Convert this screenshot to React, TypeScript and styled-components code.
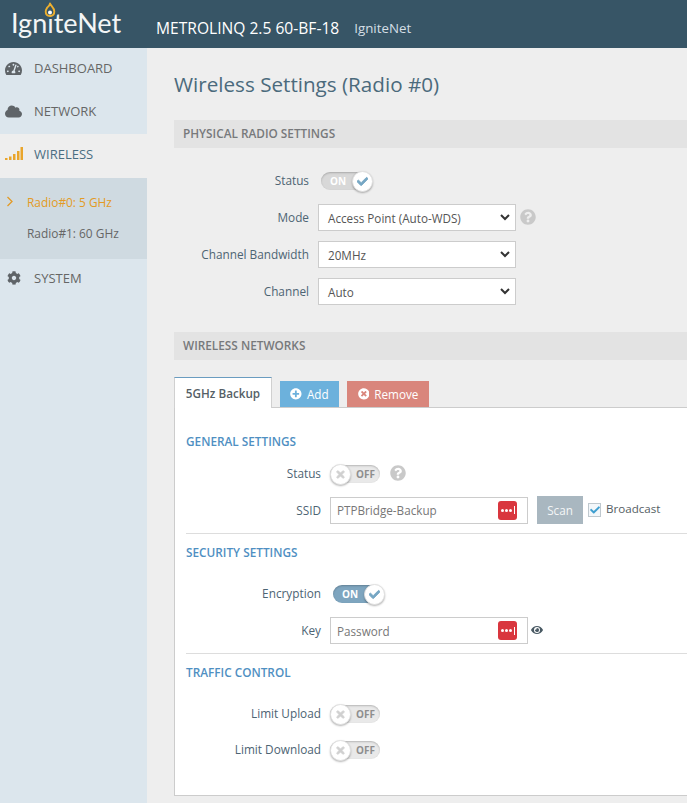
import React from "react";
import styled, { createGlobalStyle } from "styled-components";
import { FaCheck, FaCloud, FaCog, FaEye, FaPlusCircle, FaQuestionCircle, FaTachometerAlt, FaTimes, FaTimesCircle } from "react-icons/fa";

const Global = createGlobalStyle`
  html, body { margin: 0; padding: 0; background: #eeeeee; overflow: hidden; }
  * { box-sizing: border-box; }
  body { font-family: "Open Sans", "Noto Sans", sans-serif; font-size: 12px; color: #4d6473; }
`;

const Page = styled.div`width: 687px; height: 803px; display: flex; flex-direction: column; overflow: hidden;`;
const Header = styled.header`height: 48px; flex: none; background: #375566; display: flex; align-items: center;`;
const LogoBox = styled.div`position: relative; width: 156px; height: 48px; padding: 8px 0 0 11px;`;
const LogoText = styled.span`font-family: "Lato", sans-serif; font-size: 27px; font-weight: 400; line-height: 30px; color: #f3f5f6;`;
const Flame = styled.svg`position: absolute; left: 44px; top: 2px;`;
const Device = styled.span`font-size: 15.6px; font-weight: 400; color: #fff; margin-top: 7px;`;
const DeviceOwner = styled.span`font-size: 13.3px; color: #d5dfe5; margin: 8px 0 0 15px;`;

const Body = styled.div`flex: 1; display: flex; min-height: 0;`;
const Sidebar = styled.nav`width: 147px; flex: none; background: #dce6ed; display: flex; flex-direction: column;`;
const NavItem = styled.div<{ $active?: boolean; $h: number }>`
  height: ${p => p.$h}px; display: flex; align-items: center; padding: 0 0 ${p => (p.$active ? 4 : 3)}px 5px;
  background: ${p => (p.$active ? "#eeeeee" : "transparent")};
  color: ${p => (p.$active ? "#4a6d82" : "#666666")};
  font-size: 13px;
`;
const NavIcon = styled.span`width: 29px; flex: none; display: flex; color: #5f6468; font-size: 17px;`;
const CogIcon = styled.span`width: 29px; flex: none; display: flex; padding-left: 2px; color: #5f6468; font-size: 14px;`;
const SubMenu = styled.div`height: 81px; background: #cfdae1; display: flex; flex-direction: column; padding-top: 8px;`;
const SubItem = styled.div<{ $active?: boolean }>`
  height: 31px; display: flex; align-items: center; padding-left: 6px;
  color: ${p => (p.$active ? "#e39a25" : "#666666")}; font-size: 11.9px;
`;
const Chevron = styled.svg`width: 21px; flex: none;`;

const Main = styled.main`flex: 1; min-width: 0; padding: 0 0 0 27px; display: flex; flex-direction: column;`;
const Title = styled.h1`margin: 21px 0 0; height: 31px; font-size: 20.65px; line-height: 30px; font-weight: 400; color: #4b6a7c;`;
const SectionBar = styled.div<{ $top: number }>`
  margin-top: ${p => p.$top}px; height: 28px; background: #e3e3e3; padding: 0 9px 2px; display: flex; align-items: center;
  font-size: 11.8px; font-weight: 600; color: #77797b; flex: none;
`;
const Form = styled.div`margin-top: 19px; display: flex; flex-direction: column;`;
const Row = styled.div<{ $h: number; $gap?: number }>`
  display: grid; grid-template-columns: 135px auto; column-gap: 9px; height: ${p => p.$h}px; align-items: center;
  margin-top: ${p => p.$gap ?? 0}px; flex: none; justify-items: start;
`;
const Label = styled.label`justify-self: end; font-size: 11.8px; color: #4d6473; white-space: nowrap; padding-bottom: 1px;`;
const Inline = styled.div`display: flex; align-items: center;`;
const SelectBox = styled.div`
  width: 198px; height: 27px; background: #fff; border: 1px solid #cccccc; display: flex; align-items: center;
  justify-content: space-between; padding: 0 5px 0 9px; font-size: 11.7px; color: #555555;
`;
const Caret = styled.svg`width: 10px; height: 7px; flex: none;`;
const Help = styled.span<{ $ml: number }>`display: flex; color: #c9c9c9; font-size: 16px; margin: 0 0 2px ${p => p.$ml}px;`;

const Track = styled.div<{ $on?: boolean; $blue?: boolean }>`
  position: relative; width: 50px; height: 18px; border-radius: 10px; margin-left: ${p => (p.$on ? 3 : 0)}px;
  background: ${p => (p.$blue ? "#7ea5bf" : p.$on ? "#d8d8d8" : "#e9e9e9")};
  box-shadow: inset 0 1px 2px rgba(0,0,0,.22);
  font-size: 10px; font-weight: 700; color: ${p => (p.$on ? "#fff" : "#8e8e8e")};
  display: flex; align-items: center; padding: ${p => (p.$on ? "0 0 0 9px" : "0 0 0 26px")};
`;
const Knob = styled.span<{ $on?: boolean }>`
  position: absolute; top: -1px; ${p => (p.$on ? "right: -2px;" : "left: 0;")}
  width: 21px; height: 21px; border-radius: 50%; background: #fff; border: 1px solid #e1e1e1;
  box-shadow: 0 1px 2px rgba(0,0,0,.3); display: flex; align-items: center; justify-content: center;
  color: ${p => (p.$on ? "#76a7c4" : "#d0d0d0")}; font-size: 11px;
  svg { stroke: currentColor; stroke-width: 40; }
`;
const Toggle = ({ on, blue }: { on?: boolean; blue?: boolean }) => (
  <Track $on={on} $blue={blue}>
    {on ? "ON" : "OFF"}
    <Knob $on={on}>{on ? <FaCheck /> : <FaTimes />}</Knob>
  </Track>
);

const Tabs = styled.div`margin-top: 17px; height: 31px; display: flex; align-items: flex-end; flex: none; position: relative; z-index: 1;`;
const ActiveTab = styled.div`
  width: 98px; height: 31px; background: #fff; border: 1px solid #d0d0d0; border-top: 1px solid #6a9cc0; border-bottom: 0;
  display: flex; align-items: center; justify-content: center; font-size: 11.7px; font-weight: 600; color: #555f66;
`;
const TabButton = styled.div<{ $bg: string; $w: number; $ml: number }>`
  width: ${p => p.$w}px; margin-left: ${p => p.$ml}px; height: 26px; margin-bottom: 1px; background: ${p => p.$bg}; color: #fff;
  display: flex; align-items: center; justify-content: center; gap: 5px; font-size: 11.7px;
`;
const Panel = styled.div`
  margin-top: -1px; height: 389px; width: 560px; flex: none; background: #fff; border: 1px solid #cccccc; padding: 0 11px; display: flex; flex-direction: column;
`;
const PanelHeading = styled.h3<{ $top: number }>`
  margin: ${p => p.$top}px 0 0; height: 18px; line-height: 18px; font-size: 11.8px; font-weight: 600; color: #4f8fc2; flex: none;
`;
const Divider = styled.hr<{ $top: number }>`margin: ${p => p.$top}px 0 0; border: 0; border-top: 1px solid #dddddd; width: 100%; flex: none;`;
const InputBox = styled.div`
  width: 198px; height: 27px; border: 1px solid #cccccc; background: #fff; display: flex; align-items: center; justify-content: space-between;
  padding: 0 10px 0 6px; font-size: 11.7px; color: #777777;
`;
const KeyBadge = styled.span`
  width: 19px; height: 19px; border-radius: 3px; background: #d9363e; display: flex; align-items: center; justify-content: center; gap: 1px; flex: none;
`;
const Dot = styled.i`width: 3px; height: 3px; border-radius: 50%; background: #fff;`;
const Bar = styled.i`width: 1px; height: 8px; background: #fff; margin-left: 1px;`;
const ScanButton = styled.div`
  width: 46px; height: 28px; background: #a9b7c0; color: #f4f6f7; font-size: 11.7px; display: flex; align-items: center; justify-content: center; margin-left: 9px;
`;
const CheckBox = styled.span`
  width: 13px; height: 14px; margin-left: 5px; border: 1px solid #bfc8ce; background: #f3f7fa; color: #3f9fd0; font-size: 10px;
  display: flex; align-items: center; justify-content: center;
`;
const CheckLabel = styled.span`margin: 0 0 4px 5px; font-size: 11.6px; color: #555e64;`;
const EyeIcon = styled.span`display: flex; margin: 0 0 2px 3px; font-size: 12px; color: #4a5a64;`;

const Key = () => (
  <KeyBadge><Dot /><Dot /><Dot /><Bar /></KeyBadge>
);

const Signal = () => (
  <svg width="18" height="16" viewBox="0 0 18 16">
    <rect x="0" y="12" width="2.5" height="2" fill="#e9a52c" />
    <rect x="4" y="10.5" width="2.5" height="3.5" fill="#e9a52c" />
    <rect x="8" y="8" width="2.5" height="6" fill="#e9a52c" />
    <rect x="12" y="5" width="2.5" height="9" fill="#e9a52c" />
    <rect x="15.500" y="1" width="2.5" height="13" fill="#e9a52c" />
  </svg>
);

const SelectCaret = () => (
  <Caret viewBox="0 0 10 7"><path d="M1 1l4 4 4-4" fill="none" stroke="#333" strokeWidth="2" /></Caret>
);

export default function App() {
  return (
    <Page>
      <Global />
      <Header>
        <LogoBox>
          <LogoText>IgniteNet</LogoText>
          <Flame width="12" height="16" viewBox="0 0 12 16">
            <path d="M6 1.500c.5 2 4.300 4 4.300 8 0 2.800-1.800 4.500-4.300 4.500S1.700 12.300 1.700 9.500C1.700 7.500 2.800 6.500 3.300 5.500 4.500 4.500 5.800 3.500 6 1.500z" fill="#375566" stroke="#eeb02f" strokeWidth="1.900" strokeLinejoin="round" />
            <circle cx="6" cy="10.500" r="2" fill="#fff" />
          </Flame>
        </LogoBox>
        <Device>METROLINQ 2.5 60-BF-18</Device>
        <DeviceOwner>IgniteNet</DeviceOwner>
      </Header>
      <Body>
        <Sidebar>
          <NavItem $h={43}><NavIcon><FaTachometerAlt /></NavIcon>DASHBOARD</NavItem>
          <NavItem $h={43}><NavIcon><FaCloud /></NavIcon>NETWORK</NavItem>
          <NavItem $h={44} $active><NavIcon><Signal /></NavIcon>WIRELESS</NavItem>
          <SubMenu>
            <SubItem $active>
              <Chevron height="11" viewBox="0 0 21 11"><path d="M1.500 1l4.500 4.500L1.500 10" fill="none" stroke="#e39a25" strokeWidth="1.300" /></Chevron>
              Radio#0: 5 GHz
            </SubItem>
            <SubItem><Chevron height="11" viewBox="0 0 21 11" />Radio#1: 60 GHz</SubItem>
          </SubMenu>
          <NavItem $h={40}><CogIcon><FaCog /></CogIcon>SYSTEM</NavItem>
        </Sidebar>
        <Main>
          <Title>Wireless Settings (Radio #0)</Title>
          <SectionBar $top={20}>PHYSICAL RADIO SETTINGS</SectionBar>
          <Form>
            <Row $h={27}><Label>Status</Label><Toggle on /></Row>
            <Row $h={27} $gap={10}>
              <Label>Mode</Label>
              <Inline>
                <SelectBox>Access Point (Auto-WDS)<SelectCaret /></SelectBox>
                <Help $ml={4}><FaQuestionCircle /></Help>
              </Inline>
            </Row>
            <Row $h={27} $gap={10}>
              <Label>Channel Bandwidth</Label>
              <SelectBox>20MHz<SelectCaret /></SelectBox>
            </Row>
            <Row $h={27} $gap={10}>
              <Label>Channel</Label>
              <SelectBox>Auto<SelectCaret /></SelectBox>
            </Row>
          </Form>
          <SectionBar $top={27}>WIRELESS NETWORKS</SectionBar>
          <Tabs>
            <ActiveTab>5GHz Backup</ActiveTab>
            <TabButton $bg="#6cb1dc" $w={59} $ml={8}><FaPlusCircle />Add</TabButton>
            <TabButton $bg="#d9867c" $w={82} $ml={8}><FaTimesCircle />Remove</TabButton>
          </Tabs>
          <Panel>
            <PanelHeading $top={24}>GENERAL SETTINGS</PanelHeading>
            <Row $h={27} $gap={10}>
              <Label>Status</Label>
              <Inline><Toggle /><Help $ml={10}><FaQuestionCircle /></Help></Inline>
            </Row>
            <Row $h={27} $gap={9}>
              <Label>SSID</Label>
              <Inline>
                <InputBox>PTPBridge-Backup<Key /></InputBox>
                <ScanButton>Scan</ScanButton>
                <CheckBox><FaCheck /></CheckBox>
                <CheckLabel>Broadcast</CheckLabel>
              </Inline>
            </Row>
            <Divider $top={10} />
            <PanelHeading $top={9}>SECURITY SETTINGS</PanelHeading>
            <Row $h={27} $gap={19}>
              <Label>Encryption</Label>
              <Toggle on blue />
            </Row>
            <Row $h={27} $gap={10}>
              <Label>Key</Label>
              <Inline><InputBox>Password<Key /></InputBox><EyeIcon><FaEye /></EyeIcon></Inline>
            </Row>
            <Divider $top={9} />
            <PanelHeading $top={9}>TRAFFIC CONTROL</PanelHeading>
            <Row $h={27} $gap={19}><Label>Limit Upload</Label><Toggle /></Row>
            <Row $h={27} $gap={9}><Label>Limit Download</Label><Toggle /></Row>
          </Panel>
        </Main>
      </Body>
    </Page>
  );
}
